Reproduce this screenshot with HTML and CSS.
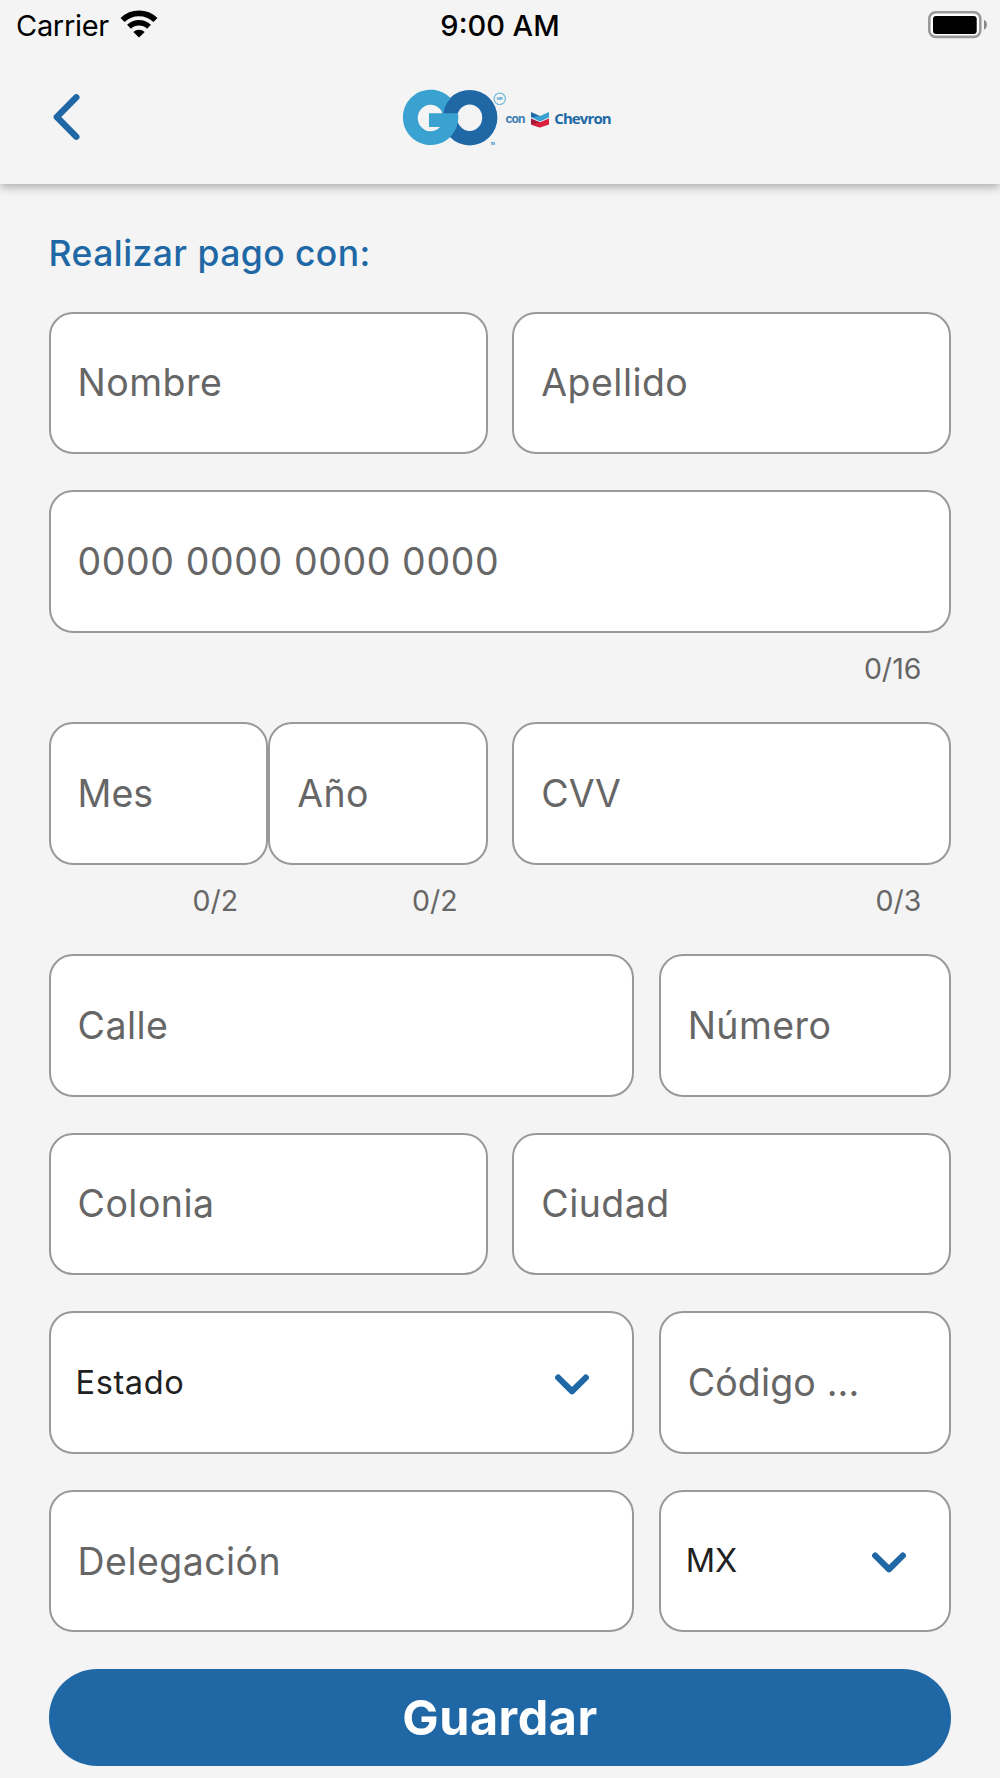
FILE: index.html
```html
<!DOCTYPE html>
<html lang="es">
<head>
    <meta charset="UTF-8">
    <meta name="viewport" content="width=device-width, initial-scale=1.0">
    <title>Realizar pago</title>
    <link rel="stylesheet" href="styles.css">
</head>
<body>
    <header class="header">
        <div class="status">
            <div class="carrier">
                <span class="carrier-name">Carrier</span>
                <svg class="wifi" width="38" height="28" viewBox="0 0 38 28">
                    <path d="M2.6 10 A23.5 23.5 0 0 1 35.4 10" fill="none" stroke="#000" stroke-width="5.8"/>
                    <path d="M9 16.8 A14.5 14.5 0 0 1 29 16.8" fill="none" stroke="#000" stroke-width="5.6"/>
                    <path d="M13.3 21.9 A8.3 8.3 0 0 1 24.7 21.9 L19 27.6 Z"/>
                </svg>
            </div>
            <div class="time">9:00 AM</div>
            <svg class="battery" width="60" height="28" viewBox="0 0 60 28">
                <rect x="1.3" y="1.3" width="51" height="24.6" rx="6.5" fill="#fff" stroke="#999" stroke-width="2.6"/>
                <rect x="5" y="5" width="43.7" height="18" rx="3"/>
                <path d="M56 8.8 Q59 10.5 59 13.8 Q59 17 56 18.8 Z" fill="#888"/>
            </svg>
        </div>
        <div class="navbar">
            <svg class="back" width="28" height="48" viewBox="0 0 28 48">
                <path d="M24.3 4.3 L4.8 24 L24.3 43.7" fill="none" stroke="#2068a5" stroke-width="6.4" stroke-linecap="round" stroke-linejoin="round"/>
            </svg>
            <svg class="logo" width="216" height="60" viewBox="400 86 216 60">
                <path fill="#2068a5" fill-rule="evenodd" d="M442 116.7 a27.7 27.7 0 1 0 55.4 0 a27.7 27.7 0 1 0 -55.4 0 Z M457.2 116.7 a12.5 13.3 0 1 1 25 0 a12.5 13.3 0 1 1 -25 0 Z"/>
                <path fill="#39a2d0" d="M450.6 97.2 A27.7 27.7 0 1 0 458 112.3 L429 112.3 L429 126 L440 126 A12.8 13.3 0 1 1 442.5 112.3 L443.4 112.3 A27.7 27.7 0 0 1 450.6 97.2 Z"/>
                <circle cx="499.7" cy="97.8" r="5.7" fill="none" stroke="#6fb9dc" stroke-width="1.2"/>
                <text x="496.7" y="99.4" class="mark" textLength="6">MR</text>
                <text x="490.5" y="144.4" class="mark" textLength="4.5">TM</text>
                <text x="505.5" y="122.2" class="con" textLength="20">con</text>
                <path fill="#2068a5" d="M531 111 L540 115 L540 119.5 L531 116 Z"/>
                <path fill="#39a2d0" d="M549 111 L540 115 L531 116.2 L540 120.4 L549 116.4 Z"/>
                <path fill="#a3173a" d="M531 117.4 L540 121.2 L540 126.5 L531 123.4 Z"/>
                <path fill="#dc1f3d" d="M549 117.4 L540 121.2 L531 123.4 L540 126.5 L549 123.4 Z"/>
                <text x="554.2" y="123.4" class="brand" textLength="57.5">Chevron</text>
            </svg>
        </div>
    </header>

    <form class="form">
        <h1 class="title">Realizar pago con:</h1>
        <div class="row half">
            <input class="field" type="text" placeholder="Nombre">
            <input class="field" type="text" placeholder="Apellido">
        </div>
        <div class="row">
            <div class="counted">
                <input class="field card" type="text" placeholder="0000 0000 0000 0000">
                <span class="count">0/16</span>
            </div>
        </div>
        <div class="row half">
            <div class="date">
                <div class="counted">
                    <input class="field short" type="text" placeholder="Mes">
                    <span class="count">0/2</span>
                </div>
                <div class="counted">
                    <input class="field" type="text" placeholder="Año">
                    <span class="count">0/2</span>
                </div>
            </div>
            <div class="counted">
                <input class="field short" type="text" placeholder="CVV">
                <span class="count">0/3</span>
            </div>
        </div>
        <div class="row wide">
            <input class="field" type="text" placeholder="Calle">
            <input class="field" type="text" placeholder="Número">
        </div>
        <div class="row half">
            <input class="field" type="text" placeholder="Colonia">
            <input class="field" type="text" placeholder="Ciudad">
        </div>
        <div class="row wide">
            <div class="field select">
                <span>Estado</span>
                <svg width="34" height="22" viewBox="0 0 34 22">
                    <path d="M3.2 3.6 L17 17.2 L30.8 3.6" fill="none" stroke="#2068a5" stroke-width="6.2" stroke-linecap="round" stroke-linejoin="round"/>
                </svg>
            </div>
            <input class="field code" type="text" placeholder="Código ...">
        </div>
        <div class="row wide">
            <input class="field" type="text" placeholder="Delegación">
            <div class="field select">
                <span class="short">MX</span>
                <svg width="34" height="22" viewBox="0 0 34 22">
                    <path d="M3.2 3.6 L17 17.2 L30.8 3.6" fill="none" stroke="#2068a5" stroke-width="6.2" stroke-linecap="round" stroke-linejoin="round"/>
                </svg>
            </div>
        </div>
        <button class="save" type="button">Guardar</button>
    </form>
</body>
</html>
```
FILE: styles.css
```css
*{
    box-sizing: border-box;
}
body{
    margin: 0;
    height: 1778px;
    overflow: hidden;
    background: #f4f4f4;
    font-family: Inter, "Liberation Sans", sans-serif;
}
.header{
    height: 184px;
    background: #f4f4f4;
    box-shadow: 0 3px 9px rgba(0,0,0,0.3);
}
.status{
    display: grid;
    grid-template-columns: 1fr auto 1fr;
    align-items: center;
    height: 50px;
    padding: 0 12px 0 16px;
}
.carrier{
    display: flex;
    align-items: center;
    gap: 11px;
    font-size: 29px;
    letter-spacing: -0.3px;
}
.wifi{
    margin-bottom: 3px;
}
.time{
    margin-right: 4px;
    font-size: 29px;
    font-weight: 500;
}
.battery{
    justify-self: end;
    margin-bottom: 1px;
}
.navbar{
    display: grid;
    grid-template-columns: 400px 216px;
    align-items: center;
    height: 133px;
}
.back{
    margin-left: 52px;
}
.mark{
    font-size: 4px;
    font-weight: 700;
    fill: #4b9fcb;
}
.con{
    font-size: 12px;
    font-weight: 700;
    fill: #3f7fb5;
}
.brand{
    font-family: "Open Sans", sans-serif;
    font-size: 15px;
    font-weight: 700;
    fill: #2068a5;
}
.form{
    display: flex;
    flex-direction: column;
    gap: 36.2px;
    padding: 47px 48.6px 0;
}
.title{
    margin: 0 0 -1.5px;
    font-size: 35.5px;
    line-height: 46px;
    font-weight: 500;
    letter-spacing: 0.43px;
    color: #2068a5;
}
.row{
    display: grid;
    grid-template-columns: 1fr;
    column-gap: 24.6px;
}
.half{
    grid-template-columns: 1fr 1fr;
}
.wide{
    grid-template-columns: 2fr 1fr;
}
.date{
    display: grid;
    grid-template-columns: 1fr 1fr;
}
.counted{
    display: flex;
    flex-direction: column;
    min-width: 0;
}
.field{
    width: 100%;
    min-width: 0;
    height: 142.4px;
    padding: 0 27px;
    border: 2px solid #999;
    border-radius: 24px;
    background: #fff;
    font-family: inherit;
    font-size: 37.5px;
    letter-spacing: 0.45px;
}
.field::placeholder{
    color: #666;
    opacity: 1;
}
.card{
    letter-spacing: 0.6px;
}
.code{
    letter-spacing: 0.15px;
}
.short{
    letter-spacing: 0;
}
.count{
    height: 53.4px;
    padding: 18px 30px 0 0;
    text-align: right;
    font-size: 28.5px;
    line-height: 36px;
    color: #666;
}
.select{
    display: flex;
    align-items: center;
    justify-content: space-between;
    padding: 0 43px 0 25px;
    font-size: 32.5px;
    letter-spacing: 0.6px;
    color: #212121;
}
.select span{
    margin-bottom: 1px;
}
.select .short{
    letter-spacing: 0;
}
.select svg{
    margin-top: 4px;
}
.save{
    height: 97px;
    border: none;
    border-radius: 48px;
    background: #2068a5;
    color: #fff;
    font-family: inherit;
    font-size: 48.5px;
    font-weight: 700;
    letter-spacing: 0.5px;
}
```
